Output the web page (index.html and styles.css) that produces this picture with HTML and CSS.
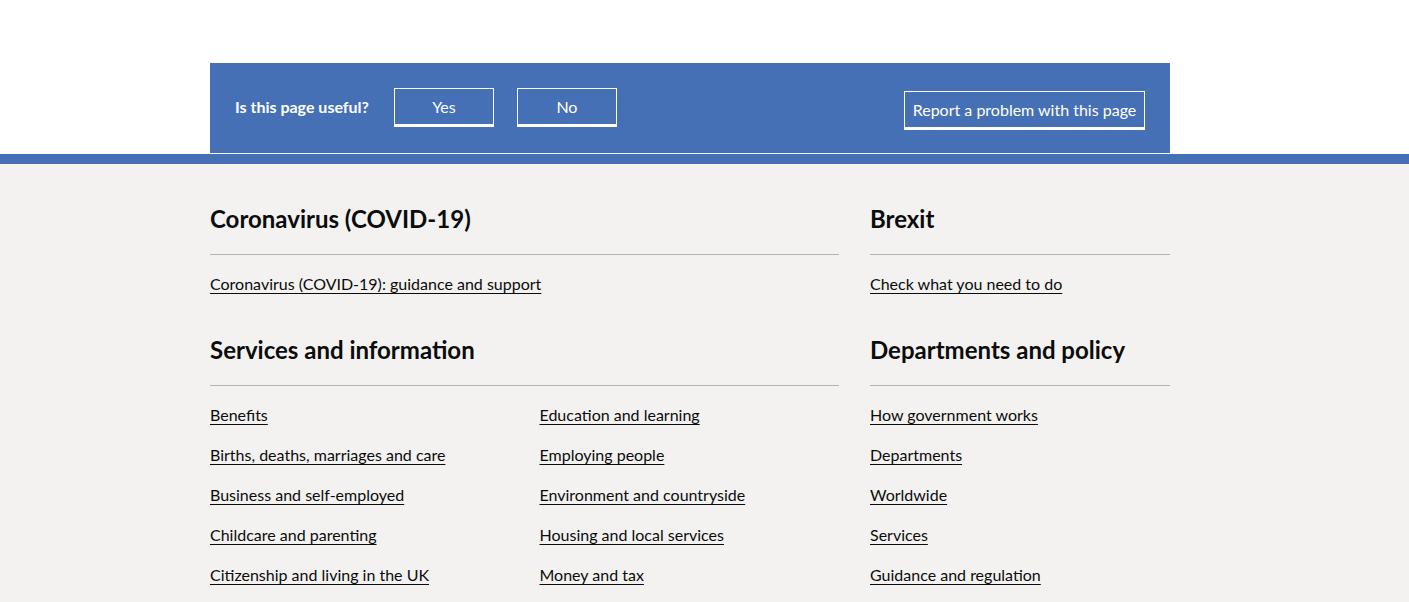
FILE: index.html
```html
<!DOCTYPE html>
<html lang="en">
<head>
<meta charset="utf-8">
<title>GOV.UK footer</title>
<link rel="stylesheet" href="styles.css">
</head>
<body>
<main class="main">
  <div class="feedback">
    <div class="feedback-prompt">
      <span class="feedback-question">Is this page useful?</span>
      <button class="fb-btn fb-btn-small">Yes</button>
      <button class="fb-btn fb-btn-small">No</button>
    </div>
    <button class="fb-btn fb-btn-report">Report a problem with this page</button>
  </div>
</main>
<footer class="footer">
  <div class="footer-inner">
    <div class="footer-row">
      <div class="col-two-thirds">
        <h2 class="footer-heading">Coronavirus (COVID-19)</h2>
        <ul class="footer-list">
          <li><a href="#">Coronavirus (COVID-19): guidance and support</a></li>
        </ul>
      </div>
      <div class="col-one-third">
        <h2 class="footer-heading">Brexit</h2>
        <ul class="footer-list">
          <li><a href="#">Check what you need to do</a></li>
        </ul>
      </div>
    </div>
    <div class="footer-row">
      <div class="col-two-thirds">
        <h2 class="footer-heading">Services and information</h2>
        <ul class="footer-list footer-list-two">
          <li><a href="#">Benefits</a></li>
          <li><a href="#">Births, deaths, marriages and care</a></li>
          <li><a href="#">Business and self-employed</a></li>
          <li><a href="#">Childcare and parenting</a></li>
          <li><a href="#">Citizenship and living in the UK</a></li>
          <li><a href="#">Education and learning</a></li>
          <li><a href="#">Employing people</a></li>
          <li><a href="#">Environment and countryside</a></li>
          <li><a href="#">Housing and local services</a></li>
          <li><a href="#">Money and tax</a></li>
        </ul>
      </div>
      <div class="col-one-third">
        <h2 class="footer-heading">Departments and policy</h2>
        <ul class="footer-list">
          <li><a href="#">How government works</a></li>
          <li><a href="#">Departments</a></li>
          <li><a href="#">Worldwide</a></li>
          <li><a href="#">Services</a></li>
          <li><a href="#">Guidance and regulation</a></li>
        </ul>
      </div>
    </div>
  </div>
</footer>
</body>
</html>
```
FILE: styles.css
```css
html, body {
  margin: 0;
  padding: 0;
}
body {
  font-family: Lato, "Liberation Sans", sans-serif;
  color: #0b0c0c;
  background: #ffffff;
}
.main {
  padding-top: 63px;
  padding-bottom: 1px;
  padding-right: 29px;
}
.feedback {
  width: 960px;
  height: 90px;
  margin: 0 auto;
  box-sizing: border-box;
  background: #4670b6;
  color: #ffffff;
  padding: 25px 25px 0 25px;
  display: flex;
  justify-content: space-between;
  align-items: flex-start;
}
.feedback-prompt {
  display: flex;
  align-items: center;
  gap: 23px;
}
.feedback-question {
  font-weight: 700;
  font-size: 16px;
  line-height: 20px;
  margin-right: 2px;
}
.fb-btn {
  font-family: inherit;
  font-size: 16px;
  line-height: 20px;
  color: #ffffff;
  background: transparent;
  border: 1px solid #ffffff;
  box-shadow: 0 2px 0 #ffffff;
  height: 37px;
  padding: 0;
  margin: 0;
  cursor: pointer;
  white-space: nowrap;
}
.fb-btn-small {
  width: 100px;
}
.fb-btn-report {
  width: 241px;
  margin-top: 3px;
}
.footer {
  background: #f3f2f1;
  border-top: 10px solid #4670b6;
  padding-top: 40px;
  padding-right: 29px;
  min-height: 600px;
}
.footer-inner {
  width: 960px;
  margin: 0 auto;
}
.footer-row {
  display: grid;
  grid-template-columns: 629px 300px;
  column-gap: 31px;
  margin-bottom: 21px;
}
.footer-heading {
  margin: 0 0 20px 0;
  padding: 0;
  font-size: 24px;
  line-height: 30px;
  font-weight: 700;
}
.footer-heading::after {
  content: "";
  display: block;
  margin-top: 20px;
  border-bottom: 1px solid #b1b4b6;
}
.footer-list {
  list-style: none;
  margin: 0;
  padding: 0;
  margin-top: -1px;
}
.footer-list-two {
  column-count: 2;
  column-gap: 30px;
}
.footer-list li {
  font-size: 16px;
  line-height: 20px;
  margin: 0 0 20px 0;
  break-inside: avoid;
}
.footer-list a {
  color: #0b0c0c;
  text-decoration: underline;
  text-decoration-thickness: 1px;
  text-underline-offset: 3px;
}
```
